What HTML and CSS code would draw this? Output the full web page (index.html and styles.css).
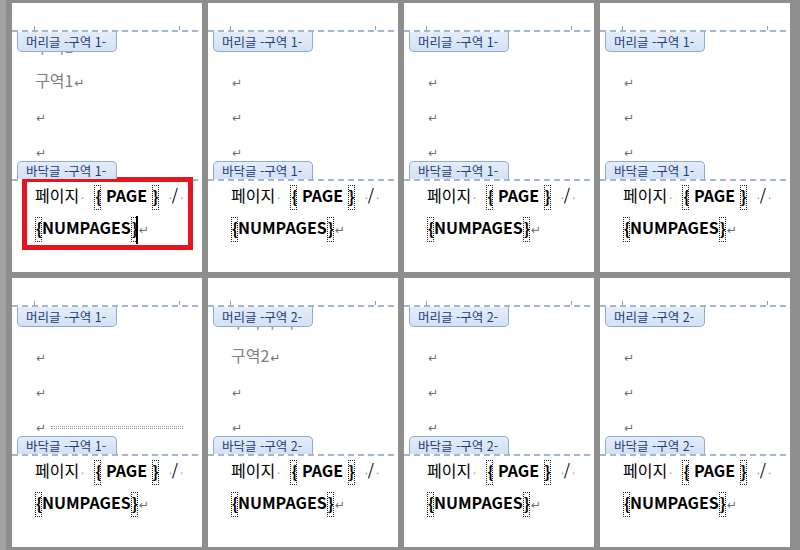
FILE: index.html
```html
<!DOCTYPE html>
<html lang="ko">

<head>
    <meta charset="UTF-8">
    <meta name="viewport" content="width=device-width, initial-scale=1.0">
    <title>머리글/바닥글 구역</title>
    <link rel="stylesheet" href="styles.css">
</head>

<body>
    <div class="view">
        <!-- 1행 -->
        <div class="page">
            <div class="margin-top"><i class="tick"></i><i class="tick"></i></div>
            <div class="rule"></div>
            <div class="header">
                <span class="tab tab-head">머리글 -구역 1-</span>
                <p class="header-text">구역1</p>
            </div>
            <div class="body">
                <p class="line">구역1<span class="ret">↵</span></p>
                <p class="line"><span class="ret">↵</span></p>
                <p class="line"><span class="ret">↵</span></p>
            </div>
            <div class="footer">
                <span class="tab tab-foot">바닥글 -구역 1-</span>
                <div class="rule"></div>
                <p class="fline first">페이지<span class="sp">·</span> <span class="fld open">{</span> <b>PAGE</b> <span class="fld">}</span> <span class="sp slash">·</span>/<span class="sp">·</span></p>
                <p class="fline"><span class="fld">{</span><b>NUMPAGES</b><span class="fld">}</span><span class="caret"></span><span class="ret">↵</span></p>
            </div>
            <div class="mark"></div>
        </div>

        <div class="page">
            <div class="margin-top"><i class="tick"></i><i class="tick"></i></div>
            <div class="rule"></div>
            <div class="header">
                <span class="tab tab-head">머리글 -구역 1-</span>
            </div>
            <div class="body">
                <p class="line"><span class="ret">↵</span></p>
                <p class="line"><span class="ret">↵</span></p>
                <p class="line"><span class="ret">↵</span></p>
            </div>
            <div class="footer">
                <span class="tab tab-foot">바닥글 -구역 1-</span>
                <div class="rule"></div>
                <p class="fline first">페이지<span class="sp">·</span> <span class="fld open">{</span> <b>PAGE</b> <span class="fld">}</span> <span class="sp slash">·</span>/<span class="sp">·</span></p>
                <p class="fline"><span class="fld">{</span><b>NUMPAGES</b><span class="fld">}</span><span class="ret">↵</span></p>
            </div>
        </div>

        <div class="page">
            <div class="margin-top"><i class="tick"></i><i class="tick"></i></div>
            <div class="rule"></div>
            <div class="header">
                <span class="tab tab-head">머리글 -구역 1-</span>
            </div>
            <div class="body">
                <p class="line"><span class="ret">↵</span></p>
                <p class="line"><span class="ret">↵</span></p>
                <p class="line"><span class="ret">↵</span></p>
            </div>
            <div class="footer">
                <span class="tab tab-foot">바닥글 -구역 1-</span>
                <div class="rule"></div>
                <p class="fline first">페이지<span class="sp">·</span> <span class="fld open">{</span> <b>PAGE</b> <span class="fld">}</span> <span class="sp slash">·</span>/<span class="sp">·</span></p>
                <p class="fline"><span class="fld">{</span><b>NUMPAGES</b><span class="fld">}</span><span class="ret">↵</span></p>
            </div>
        </div>

        <div class="page">
            <div class="margin-top"><i class="tick"></i><i class="tick"></i></div>
            <div class="rule"></div>
            <div class="header">
                <span class="tab tab-head">머리글 -구역 1-</span>
            </div>
            <div class="body">
                <p class="line"><span class="ret">↵</span></p>
                <p class="line"><span class="ret">↵</span></p>
                <p class="line"><span class="ret">↵</span></p>
            </div>
            <div class="footer">
                <span class="tab tab-foot">바닥글 -구역 1-</span>
                <div class="rule"></div>
                <p class="fline first">페이지<span class="sp">·</span> <span class="fld open">{</span> <b>PAGE</b> <span class="fld">}</span> <span class="sp slash">·</span>/<span class="sp">·</span></p>
                <p class="fline"><span class="fld">{</span><b>NUMPAGES</b><span class="fld">}</span><span class="ret">↵</span></p>
            </div>
        </div>

        <!-- 2행 -->
        <div class="page">
            <div class="margin-top"><i class="tick"></i><i class="tick"></i></div>
            <div class="rule"></div>
            <div class="header">
                <span class="tab tab-head">머리글 -구역 1-</span>
            </div>
            <div class="body">
                <p class="line"><span class="ret">↵</span></p>
                <p class="line"><span class="ret">↵</span></p>
                <p class="line"><span class="ret">↵</span><span class="brk"></span></p>
            </div>
            <div class="footer">
                <span class="tab tab-foot">바닥글 -구역 1-</span>
                <div class="rule"></div>
                <p class="fline first">페이지<span class="sp">·</span> <span class="fld open">{</span> <b>PAGE</b> <span class="fld">}</span> <span class="sp slash">·</span>/<span class="sp">·</span></p>
                <p class="fline"><span class="fld">{</span><b>NUMPAGES</b><span class="fld">}</span><span class="ret">↵</span></p>
            </div>
        </div>

        <div class="page">
            <div class="margin-top"><i class="tick"></i><i class="tick"></i></div>
            <div class="rule"></div>
            <div class="header">
                <span class="tab tab-head">머리글 -구역 2-</span>
                <p class="header-text">구역 구역</p>
            </div>
            <div class="body">
                <p class="line">구역2<span class="ret">↵</span></p>
                <p class="line"><span class="ret">↵</span></p>
                <p class="line"><span class="ret">↵</span></p>
            </div>
            <div class="footer">
                <span class="tab tab-foot">바닥글 -구역 2-</span>
                <div class="rule"></div>
                <p class="fline first">페이지<span class="sp">·</span> <span class="fld open">{</span> <b>PAGE</b> <span class="fld">}</span> <span class="sp slash">·</span>/<span class="sp">·</span></p>
                <p class="fline"><span class="fld">{</span><b>NUMPAGES</b><span class="fld">}</span><span class="ret">↵</span></p>
            </div>
        </div>

        <div class="page">
            <div class="margin-top"><i class="tick"></i><i class="tick"></i></div>
            <div class="rule"></div>
            <div class="header">
                <span class="tab tab-head">머리글 -구역 2-</span>
            </div>
            <div class="body">
                <p class="line"><span class="ret">↵</span></p>
                <p class="line"><span class="ret">↵</span></p>
                <p class="line"><span class="ret">↵</span></p>
            </div>
            <div class="footer">
                <span class="tab tab-foot">바닥글 -구역 2-</span>
                <div class="rule"></div>
                <p class="fline first">페이지<span class="sp">·</span> <span class="fld open">{</span> <b>PAGE</b> <span class="fld">}</span> <span class="sp slash">·</span>/<span class="sp">·</span></p>
                <p class="fline"><span class="fld">{</span><b>NUMPAGES</b><span class="fld">}</span><span class="ret">↵</span></p>
            </div>
        </div>

        <div class="page">
            <div class="margin-top"><i class="tick"></i><i class="tick"></i></div>
            <div class="rule"></div>
            <div class="header">
                <span class="tab tab-head">머리글 -구역 2-</span>
            </div>
            <div class="body">
                <p class="line"><span class="ret">↵</span></p>
                <p class="line"><span class="ret">↵</span></p>
                <p class="line"><span class="ret">↵</span></p>
            </div>
            <div class="footer">
                <span class="tab tab-foot">바닥글 -구역 2-</span>
                <div class="rule"></div>
                <p class="fline first">페이지<span class="sp">·</span> <span class="fld open">{</span> <b>PAGE</b> <span class="fld">}</span> <span class="sp slash">·</span>/<span class="sp">·</span></p>
                <p class="fline"><span class="fld">{</span><b>NUMPAGES</b><span class="fld">}</span><span class="ret">↵</span></p>
            </div>
        </div>
    </div>
</body>

</html>
```

FILE: styles.css
```css
body {
    margin: 0;
    background: linear-gradient(90deg, #a2a2a2 0 6px, #8e8e8e 6px);
    font-family: "Noto Sans CJK KR", "Noto Sans", sans-serif;
}

.view {
    display: grid;
    grid-template-columns: repeat(4, 190px);
    grid-auto-rows: 269px;
    gap: 6px;
    padding: 3px 0 0 12px;
}

.page {
    position: relative;
    display: flex;
    flex-direction: column;
    background-color: #fff;
}

.margin-top {
    height: 27px;
    display: flex;
    justify-content: space-between;
    align-items: flex-end;
    padding: 0 22px;
}

.tick {
    width: 1px;
    height: 4px;
    background-color: #9a9a9a;
}

.rule {
    height: 2px;
    background: repeating-linear-gradient(90deg, #a3b7d4 0 6px, transparent 6px 10px);
}

.header {
    position: relative;
    height: 31px;
}

.header-text {
    margin: 0;
    padding: 4px 0 0 23px;
    font-size: 16px;
    line-height: 20px;
    color: #8a8a8a;
}

.tab {
    position: absolute;
    left: 5px;
    z-index: 1;
    height: 19px;
    padding: 0 10px 0 8px;
    font-size: 12.5px;
    line-height: 19px;
    color: #1c3b78;
    white-space: nowrap;
    background: linear-gradient(#e4edf9, #d3e1f5);
    border: 1px solid #8eabd8;
}

.tab-head {
    top: 0;
    border-top: none;
    border-radius: 0 0 5px 5px;
}

.tab-foot {
    bottom: 100%;
    height: 17px;
    line-height: 18px;
    border-bottom: none;
    border-radius: 5px 5px 0 0;
}

.body {
    height: 116px;
    padding-left: 23px;
}

.line {
    margin: 0;
    height: 35px;
    font-size: 16px;
    line-height: 35px;
    color: #808080;
}

.ret {
    margin-left: 1px;
    font-family: "DejaVu Sans", sans-serif;
    font-size: 12px;
    color: #6e6e6e;
}

.brk {
    display: inline-block;
    width: 132px;
    height: 1px;
    margin-left: 5px;
    vertical-align: middle;
    border-top: 1px dotted #999;
    border-bottom: 1px dotted #999;
}

.footer {
    position: relative;
}

.fline {
    height: 32px;
    margin: 0;
    padding-left: 23px;
    font-size: 16px;
    line-height: 32px;
    color: #000;
    white-space: nowrap;
}

.fline.first {
    margin-top: -2px;
}

.fline b {
    font-weight: bold;
}

.sp {
    margin-left: 2px;
    font-size: 10px;
    color: #888;
}

.sp.slash {
    margin-left: 6px;
}

.fld {
    display: inline-block;
    width: 5px;
    height: 23px;
    overflow: hidden;
    vertical-align: middle;
    font-weight: bold;
    line-height: 23px;
    border: 1px dotted #222;
}

.fld.open {
    margin-left: 6px;
}

.caret {
    display: inline-block;
    width: 2px;
    height: 28px;
    margin-left: -2px;
    vertical-align: middle;
    background-color: #000;
}

.mark {
    position: absolute;
    left: 10px;
    top: 174px;
    width: 171px;
    height: 73px;
    box-sizing: border-box;
    border: 5px solid #e5161f;
}
```
